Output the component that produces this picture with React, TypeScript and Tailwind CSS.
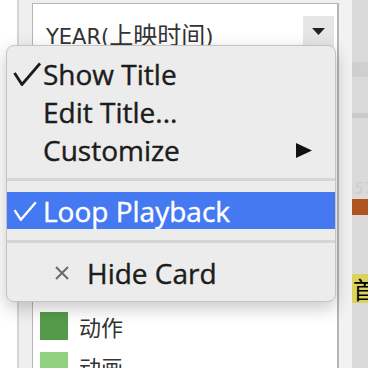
import React from 'react'

const menuFont = { fontFamily: '"Open Sans", "DejaVu Sans", sans-serif' }

function Check({ color = '#1c1c1c', w = 28, h = 24 }: { color?: string; w?: number; h?: number }) {
  return (
    <svg width={w} height={h} viewBox="0 0 28 24" fill="none">
      <polyline points="1.5,11 9,22.5 27,1.5" stroke={color} strokeWidth="2.8" />
    </svg>
  )
}

function MenuItem({ label, checked, active, arrow }: { label: string; checked?: boolean; active?: boolean; arrow?: boolean }) {
  return (
    <div className={`flex items-center pl-[6px] ${active ? 'h-[37px] bg-[#4479f2] text-white' : 'h-[38px] text-[#1c1c1c]'}`}>
      <div className="w-[30px] flex items-center">
        {checked && <Check color={active ? '#ffffff' : '#1c1c1c'} w={active ? 24 : 28} h={active ? 20 : 24} />}
      </div>
      <span className="text-[28px] leading-none [-webkit-text-stroke:0.4px_currentColor]">{label}</span>
      {arrow && (
        <svg className="ml-auto mr-[23px]" width="16" height="15" viewBox="0 0 16 15">
          <polygon points="0,0 16,7.5 0,15" fill="#111" />
        </svg>
      )}
    </div>
  )
}

function Separator({ top, bottom }: { top: string; bottom: string }) {
  return (
    <div className={`${top} ${bottom}`}>
      <div className="h-[3px] bg-[#d5d5d5]" />
    </div>
  )
}

export default function App() {
  const legend = [
    { name: '动作', color: 'bg-[#559a4a]' },
    { name: '动画', color: 'bg-[#8fd17f]' },
  ]

  return (
    <div className="relative flex w-[368px] h-[368px] overflow-hidden bg-[#efefef]">
      {/* left panel edge */}
      <div className="w-[19px] bg-white border-r-2 border-[#d4d4d4]" />
      <div className="w-[13px] bg-[#efefef]" />

      {/* card */}
      <div className="w-[307px] pt-[3px] bg-[#efefef]">
        <div className="h-full bg-white border-l border-t border-r-2 border-[#b6b6b6] flex flex-col overflow-hidden">
          <div className="h-[46px] shrink-0 flex items-start justify-between">
            <div
              className="pl-[13px] pt-[18px] text-[21px] leading-none text-[#333]"
              style={{ fontFamily: '"DejaVu Sans", "Noto Sans CJK SC", sans-serif' }}
            >
              YEAR(<span className="text-[24px]" style={{ fontFamily: '"Noto Sans CJK SC", sans-serif' }}>上映时间</span>)
            </div>
            <div className="mt-[12px] mr-[3px] w-[31px] h-[34px] bg-[#e6e6e6] flex justify-center pt-[12px]">
              <svg width="13" height="7" viewBox="0 0 13 7">
                <polygon points="0,0 13,0 6.5,7" fill="#222" />
              </svg>
            </div>
          </div>
          <div className="h-[256px] shrink-0" />
          <div className="flex flex-col shrink-0">
            {legend.map((item) => (
              <div key={item.name} className="h-[40px] shrink-0 flex items-start pl-[7px] pt-[6px] gap-[11px]">
                <div className={`w-[28px] h-[28px] ${item.color}`} />
                <span
                  className="text-[22px] leading-[28px] text-[#333]"
                  style={{ fontFamily: '"Noto Sans CJK SC", sans-serif' }}
                >
                  {item.name}
                </span>
              </div>
            ))}
          </div>
        </div>
      </div>

      {/* right strips */}
      <div className="w-[13px] bg-[#f2f2f2]" />
      <div className="flex-1 bg-[#dadada] flex flex-col overflow-hidden">
        <div className="h-[62px] shrink-0" />
        <div className="h-[15px] shrink-0 bg-[#cfcfcf]" />
        <div className="h-[36px] shrink-0" />
        <div className="h-[5px] shrink-0 bg-[#cacaca]" />
        <div className="h-[60px] shrink-0" />
        <div className="h-[21px] shrink-0 text-[16px] leading-[21px] italic text-[#cdcdcd] pl-[2px]" style={{ fontFamily: '"DejaVu Sans", sans-serif' }}>57</div>
        <div className="h-[16px] shrink-0 bg-[#b0541f]" />
        <div className="h-[59px] shrink-0" />
        <div className="h-[29px] shrink-0 bg-[#d8d45c] overflow-hidden">
          <span className="block text-[24px] leading-[29px] text-black pl-[1px] whitespace-nowrap" style={{ fontFamily: '"Noto Sans CJK SC", sans-serif' }}>首</span>
        </div>
      </div>

      {/* context menu */}
      <div
        className="absolute left-[6px] top-[45px] w-[330px] h-[257px] rounded-[8px] bg-[#ececec] border border-[#c4c4c4] shadow-[0_6px_18px_rgba(0,0,0,0.22)] pt-[9px] overflow-hidden"
        style={menuFont}
      >
        <MenuItem label="Show Title" checked />
        <MenuItem label="Edit Title..." />
        <MenuItem label="Customize" arrow />
        <Separator top="pt-[9px]" bottom="pb-[11px]" />
        <MenuItem label="Loop Playback" checked active />
        <Separator top="pt-[11px]" bottom="pb-[10px]" />
        <div className="h-[40px] flex items-center pl-[48px] text-[#1c1c1c]">
          <svg width="14" height="14" viewBox="0 0 14 14">
            <path d="M1 1 L13 13 M13 1 L1 13" stroke="#6b6b6b" strokeWidth="2" />
          </svg>
          <span className="ml-[18px] text-[28px] leading-none [-webkit-text-stroke:0.4px_currentColor]">Hide Card</span>
        </div>
      </div>
    </div>
  )
}
